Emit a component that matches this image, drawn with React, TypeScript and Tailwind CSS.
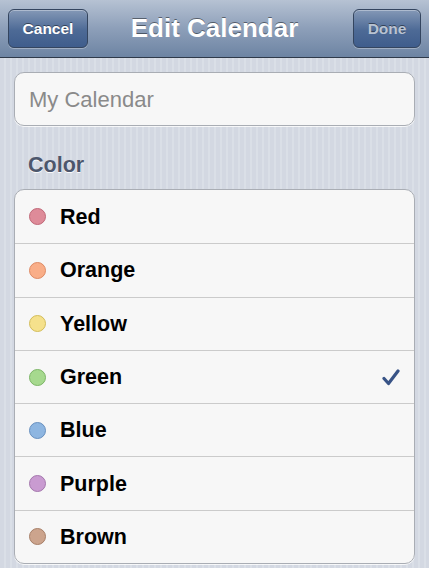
import React from "react";

type Swatch = { name: string; fill: string; ring: string };

const colors: Swatch[] = [
  { name: "Red", fill: "bg-[#de8b99]", ring: "border-[#c06878]" },
  { name: "Orange", fill: "bg-[#f9ae88]", ring: "border-[#de8a64]" },
  { name: "Yellow", fill: "bg-[#f5e18c]", ring: "border-[#d3bd5a]" },
  { name: "Green", fill: "bg-[#a6d98e]", ring: "border-[#7cb566]" },
  { name: "Blue", fill: "bg-[#8eb6e1]", ring: "border-[#6890bf]" },
  { name: "Purple", fill: "bg-[#c99bd1]", ring: "border-[#a477ad]" },
  { name: "Brown", fill: "bg-[#cca48d]", ring: "border-[#a77f68]" },
];

const selected = "Green";

const NavButton = ({ label, dim }: { label: string; dim?: boolean }) => (
  <button
    className={
      "h-[39px] rounded-[6px] border border-[#34455f] bg-[linear-gradient(#8498b6,#4d6a96_55%,#3f5d8c)] shadow-[inset_0_1px_0_rgba(255,255,255,0.35),0_1px_0_rgba(255,255,255,0.3)] text-[15.5px] font-bold [text-shadow:0_-1px_0_rgba(0,0,0,0.45)] " +
      (dim ? "w-[68px] text-[#b9c3d2]" : "w-[80px] text-white")
    }
  >
    {label}
  </button>
);

const App: React.FC = () => {
  return (
    <div className="w-[435px] h-[571px] bg-white overflow-hidden font-['Liberation_Sans',Arial,sans-serif]">
      <div className="w-[429px] h-[568px] flex flex-col bg-[#d6dbe4] bg-[repeating-linear-gradient(90deg,#d3d8e2_0px,#d3d8e2_4px,#dadfe7_4px,#dadfe7_6px)]">
        {/* nav bar */}
        <div className="relative h-[58px] shrink-0 flex items-center justify-between px-[8px] bg-[linear-gradient(#b6c2d3,#8d9fb9_50%,#6d84a3)] border-b border-[#2f3a4a]">
          <NavButton label="Cancel" />
          <span className="absolute left-0 right-0 text-center text-[26px] font-bold text-white [text-shadow:0_-1px_0_rgba(0,0,0,0.45)] pointer-events-none">
            Edit Calendar
          </span>
          <NavButton label="Done" dim />
        </div>

        <div className="px-[14px] pt-[14px]">
          {/* name field */}
          <div className="h-[54px] rounded-[10px] border border-[#a9adb4] bg-[#f7f7f7] shadow-[0_1px_0_rgba(255,255,255,0.8)] flex items-center px-[14px]">
            <span className="text-[22px] text-[#8a8a8a]">My Calendar</span>
          </div>

          <div className="mt-[26px] ml-[14px] h-[26px] leading-[26px] text-[21.5px] font-bold text-[#4c566c] [text-shadow:0_1px_0_rgba(255,255,255,0.9)]">
            Color
          </div>

          {/* colour list */}
          <div className="mt-[11px] rounded-[10px] border border-[#a9adb4] bg-[#f7f7f7] shadow-[0_1px_0_rgba(255,255,255,0.8)] overflow-hidden">
            {colors.map((c, i) => (
              <div
                key={c.name}
                className={
                  "h-[53.3px] flex items-center pl-[14px] pr-[14px] " +
                  (i > 0 ? "border-t border-[#cbcbcb]" : "")
                }
              >
                <span className={"w-[17px] h-[17px] rounded-full border " + c.fill + " " + c.ring} />
                <span className="ml-[14px] flex-1 text-[21.5px] font-bold text-black">{c.name}</span>
                {c.name === selected && (
                  <svg width="18" height="17" viewBox="0 0 18 17">
                    <path
                      d="M2 9.5 L6.5 14.5 L16 2"
                      fill="none"
                      stroke="#385386"
                      strokeWidth="3.2"
                      strokeLinecap="round"
                      strokeLinejoin="round"
                    />
                  </svg>
                )}
              </div>
            ))}
          </div>
        </div>
      </div>
    </div>
  );
};

export default App;
